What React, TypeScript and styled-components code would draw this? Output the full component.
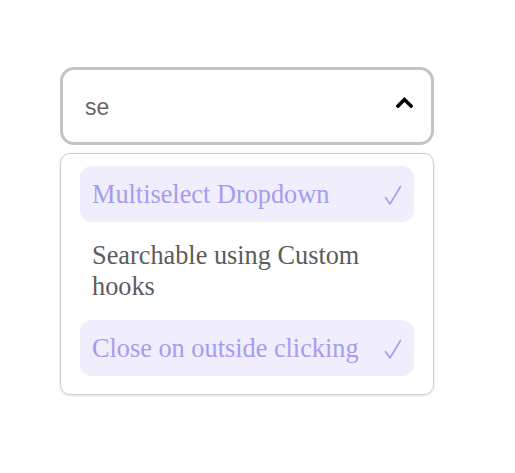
import React from "react";
import styled, { createGlobalStyle } from "styled-components";

const Global = createGlobalStyle`
  html, body { margin: 0; padding: 0; background: #ffffff; }
  * { box-sizing: border-box; }
`;

const Page = styled.div`
  padding: 67px 0 0 60px;
  width: 515px;
  height: 473px;
`;

const Select = styled.div`
  width: 374px;
  display: flex;
  flex-direction: column;
  gap: 8px;
`;

const Control = styled.div`
  height: 78px;
  border: 3px solid #c4c4c4;
  border-radius: 14px;
  display: flex;
  align-items: center;
  padding: 0 18px 0 22px;
  background: #fff;
`;

const SearchInput = styled.input`
  flex: 1;
  border: none;
  outline: none;
  background: transparent;
  font-family: "Liberation Sans", Arial, sans-serif;
  font-size: 23px;
  color: #666666;
  padding: 0;
  margin-top: 2px;
`;

const Chevron = styled.svg`
  width: 17px;
  height: 12px;
  margin-top: -8px;
  flex: none;
`;

const Panel = styled.ul`
  list-style: none;
  margin: 0;
  padding: 12px 19px 18px;
  border: 1px solid #cfcfcf;
  border-radius: 10px;
  box-shadow: 0 1px 3px rgba(0, 0, 0, 0.12);
  display: flex;
  flex-direction: column;
  gap: 5.5px;
  background: #fff;
`;

const Option = styled.li<{ $selected?: boolean }>`
  display: flex;
  align-items: center;
  justify-content: space-between;
  padding: 12.5px 12px;
  border-radius: 12px;
  font-family: "Liberation Serif", "Times New Roman", serif;
  font-size: 26.3px;
  line-height: 31px;
  color: ${(p) => (p.$selected ? "#a69cef" : "#5c5c5c")};
  background: ${(p) => (p.$selected ? "#f0edfc" : "transparent")};
`;

const Check = styled.svg`
  width: 18px;
  height: 22px;
  flex: none;
  margin-top: 2px;
`;

const options = [
  { label: "Multiselect Dropdown", selected: true },
  { label: "Searchable using Custom hooks", selected: false },
  { label: "Close on outside clicking", selected: true },
];

export default function App() {
  return (
    <>
      <Global />
      <Page>
        <Select>
          <Control>
            <SearchInput defaultValue="se" />
            <Chevron viewBox="0 0 17 12">
              <path
                d="M2 10 L8.5 3.5 L15 10"
                fill="none"
                stroke="#000"
                strokeWidth="3.6"
                strokeLinecap="square"
                strokeLinejoin="miter"
              />
            </Chevron>
          </Control>
          <Panel>
            {options.map((o) => (
              <Option key={o.label} $selected={o.selected}>
                <span>{o.label}</span>
                {o.selected && (
                  <Check viewBox="0 0 18 22">
                    <path
                      d="M1.5 13.5 L6 20 L16.5 2.5"
                      fill="none"
                      stroke="#a69cef"
                      strokeWidth="1.6"
                      strokeLinecap="round"
                      strokeLinejoin="round"
                    />
                  </Check>
                )}
              </Option>
            ))}
          </Panel>
        </Select>
      </Page>
    </>
  );
}
